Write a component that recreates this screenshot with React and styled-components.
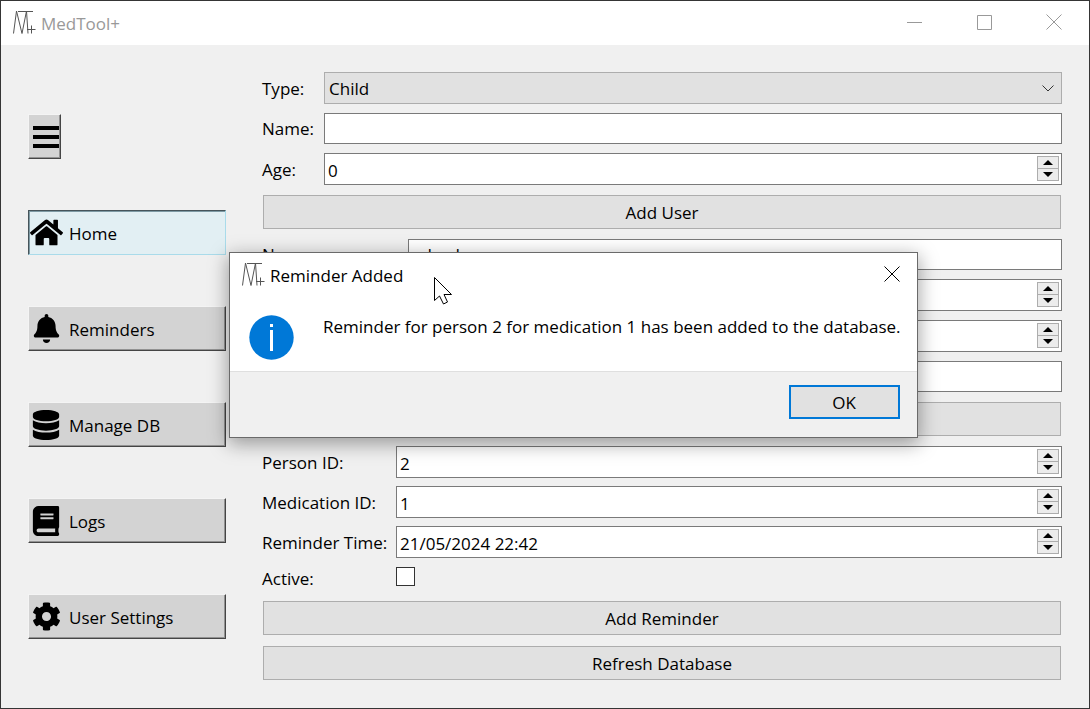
import React, { useState } from "react";
import styled, { createGlobalStyle, css } from "styled-components";
import { FaHome, FaBell, FaDatabase, FaBook, FaCog } from "react-icons/fa";

const GlobalStyle = createGlobalStyle`
  * { box-sizing: border-box; }
  body { margin: 0; background: #f0f0f0; }
  body, button, input, select {
    font-family: "Open Sans", "Noto Sans", sans-serif;
    font-size: 17px;
    line-height: 24px;
    color: #000;
  }
`;

const Window = styled.div`
  position: relative;
  display: flex;
  flex-direction: column;
  min-height: 100vh;
  border: 1px solid #353535;
  background: #f0f0f0;
`;

const TitleBar = styled.header`
  display: flex;
  align-items: center;
  height: 44px;
  padding-left: 11px;
  background: #fff;
`;

const Title = styled.h1`
  flex: 1;
  margin: 0 0 0 5px;
  padding-top: 1px;
  font-size: 17px;
  font-weight: 400;
  color: ${(p) => (p.$dim ? "#999" : "#000")};
`;

const CaptionButton = styled.button`
  display: flex;
  align-items: center;
  justify-content: center;
  width: ${(p) => p.$width || 70}px;
  height: 44px;
  padding: 0 0 2px;
  border: 0;
  background: transparent;
  color: ${(p) => (p.$dim ? "#999" : "#000")};
`;

const Body = styled.div`
  display: flex;
  flex: 1;
  padding: 27px 27px 28px;
`;

const Sidebar = styled.nav`
  display: flex;
  flex-direction: column;
  align-items: flex-start;
  gap: 51px;
  width: 198px;
  margin-right: 36px;
  padding-top: 42px;
`;

const NavButton = styled.button`
  display: flex;
  align-items: center;
  width: ${(p) => (p.$compact ? "33px" : "100%")};
  height: 45px;
  padding: 0 0 0 ${(p) => (p.$compact ? 4 : 0)}px;
  overflow: hidden;
  border: 1px solid;
  border-color: #f4f4f4 #454545 #454545 #f4f4f4;
  background: #d3d3d3;
  box-shadow: inset -1px -1px 0 #929292;
  text-align: left;
  ${(p) =>
    p.$pressed &&
    css`
      border-color: #46545a #a9dbea #a9dbea #46545a;
      box-shadow: inset 1px 1px 0 #7e9aa4;
      background: #e2eff3;
    `}
`;

const NavIcon = styled.span`
  display: flex;
  justify-content: center;
  flex: none;
  width: 34px;
  margin-right: 6px;
`;

const NavText = styled.span`
  padding-top: 2px;
`;

const Panel = styled.main`
  display: flex;
  flex: 1;
  flex-direction: column;
  gap: 10px;
  min-width: 0;
`;

const FormGroup = styled.section`
  display: grid;
  grid-template-columns: ${(p) => p.$labels}px 1fr;
  row-gap: ${(p) => p.$gap || 9}px;
  align-items: center;
`;

const Label = styled.label`
  padding-top: 1px;
  white-space: nowrap;
`;

const field = css`
  width: 100%;
  border: 1px solid #7a7a7a;
  border-radius: 0;
  background: #fff;
  outline: 0;
`;

const TextBox = styled.input`
  ${field}
  grid-column: 2;
  height: 31px;
  padding: 0 3px;
`;

const SelectWrap = styled.div`
  display: grid;
  align-items: center;
  > * { grid-area: 1 / 1; }
  > svg { justify-self: end; margin-right: 8px; pointer-events: none; }
`;

const Select = styled.select`
  ${field}
  height: 32px;
  padding: 1px 4px 0;
  border-color: #adadad;
  background: #e1e1e1;
  appearance: none;
`;

const SpinWrap = styled.div`
  ${field}
  grid-column: 2;
  display: flex;
  align-items: flex-start;
  height: 32px;
  padding: 2px 2px 0 0;
`;

const SpinInput = styled.input`
  flex: 1;
  min-width: 0;
  height: 28px;
  padding: 0 3px;
  border: 0;
  outline: 0;
  background: transparent;
`;

const Stepper = styled.div`
  display: flex;
  flex-direction: column;
  gap: 1px;
  width: 22px;
  height: 25px;
  border: 1px solid #adadad;
  background: #adadad;
`;

const StepButton = styled.button`
  display: flex;
  flex: 1;
  align-items: center;
  justify-content: center;
  min-height: 0;
  padding: 0;
  border: 0;
  background: #ececec;
`;

const CheckBox = styled.input`
  appearance: none;
  width: 19px;
  height: 19px;
  margin: 1px 0 0;
  border: 1px solid #333;
  background: #fff;
  align-self: start;
`;

const WideButton = styled.button`
  height: 34px;
  margin: 0 1px;
  padding: 2px 0 0;
  border: 1px solid #adadad;
  background: #e1e1e1;
`;

const FooterButtons = styled.div`
  display: flex;
  flex-direction: column;
  gap: 11px;
`;

const Dialog = styled.section`
  position: absolute;
  top: 251px;
  left: 228px;
  border: 1px solid #6a6a6a;
  background: #fff;
  box-shadow: 0 5px 18px 1px rgba(0, 0, 0, 0.36);
`;

const DialogMessage = styled.div`
  display: flex;
  align-items: flex-start;
  gap: 29px;
  padding: 18px 16px 11px 19px;
`;

const Message = styled.p`
  margin: 0;
  white-space: nowrap;
`;

const DialogFooter = styled.footer`
  display: flex;
  justify-content: flex-end;
  padding: 13px 17px 18px;
  border-top: 1px solid #dfdfdf;
  background: #f0f0f0;
`;

const OkButton = styled.button`
  width: 111px;
  height: 34px;
  padding: 1px 0 0;
  border: 2px solid #0078d7;
  background: #e1e1e1;
`;

const Pointer = styled.svg`
  position: absolute;
  top: 276px;
  left: 433px;
  pointer-events: none;
`;

const Logo = () => (
  <svg width="24" height="26" viewBox="0 0 24 26" fill="none" stroke="#555" strokeWidth="1" aria-hidden="true">
    <path d="M1.5 23.5 L4.5 1 L10 23.5 L14.5 1 L16 23.5" />
    <path d="M6 1.5 H21 M15 19.5 H23.5 M19.5 15.5 V23.5" />
  </svg>
);

const Cross = () => (
  <svg width="16" height="16" viewBox="0 0 16 16" stroke="currentColor" strokeWidth="1" aria-hidden="true">
    <path d="M.5 .5 L15.5 15.5 M15.5 .5 L.5 15.5" />
  </svg>
);

const Arrow = ({ down }) => (
  <svg width="10" height="5" viewBox="0 0 10 5" aria-hidden="true">
    <path d={down ? "M0 0 H10 L5 5 Z" : "M0 5 H10 L5 0 Z"} />
  </svg>
);

function Spin({ initial, ...rest }) {
  const [value, setValue] = useState(initial);
  const step = (n) => setValue((v) => (/^\d+$/.test(v) ? String(Math.max(0, Number(v) + n)) : v));
  return (
    <SpinWrap>
      <SpinInput {...rest} value={value} onChange={(e) => setValue(e.target.value)} />
      <Stepper>
        <StepButton type="button" aria-label="Increase" onClick={() => step(1)}><Arrow /></StepButton>
        <StepButton type="button" aria-label="Decrease" onClick={() => step(-1)}><Arrow down /></StepButton>
      </Stepper>
    </SpinWrap>
  );
}

const pages = [
  { name: "Home", icon: FaHome, size: 33 },
  { name: "Reminders", icon: FaBell, size: 29 },
  { name: "Manage DB", icon: FaDatabase, size: 30 },
  { name: "Logs", icon: FaBook, size: 30 },
  { name: "User Settings", icon: FaCog, size: 29 },
];

export default function App() {
  const [page, setPage] = useState("Home");
  const [open, setOpen] = useState(true);
  return (
    <>
      <GlobalStyle />
      <Window>
        <TitleBar>
          <Logo />
          <Title $dim>MedTool+</Title>
          <CaptionButton $dim aria-label="Minimize">
            <svg width="15" height="15" stroke="currentColor"><path d="M0 7.5 H15" /></svg>
          </CaptionButton>
          <CaptionButton $dim aria-label="Maximize">
            <svg width="15" height="15" stroke="currentColor" fill="none"><path d="M.5 .5 H14.5 V14.5 H.5 Z" /></svg>
          </CaptionButton>
          <CaptionButton $dim aria-label="Close"><Cross /></CaptionButton>
        </TitleBar>
        <Body>
          <Sidebar>
            <NavButton $compact aria-label="Toggle menu">
              <svg width="27" height="22" viewBox="0 0 27 22" aria-hidden="true">
                <path d="M0 0 H26 V4 H0 Z M0 9 H26 V13 H0 Z M0 18 H26 V22 H0 Z" />
              </svg>
            </NavButton>
            {pages.map(({ name, icon: Icon, size }) => (
              <NavButton key={name} $pressed={page === name} onClick={() => setPage(name)}>
                <NavIcon><Icon size={size} /></NavIcon>
                <NavText>{name}</NavText>
              </NavButton>
            ))}
          </Sidebar>
          <Panel>
            <FormGroup $labels={62}>
              <Label htmlFor="type">Type:</Label>
              <SelectWrap>
                <Select id="type" defaultValue="Child">
                  <option>Child</option>
                  <option>Adult</option>
                </Select>
                <svg width="12" height="7" fill="none" stroke="#333" aria-hidden="true"><path d="M.5 .5 L6 6 L11.5 .5" /></svg>
              </SelectWrap>
              <Label htmlFor="user-name">Name:</Label>
              <TextBox id="user-name" />
              <Label htmlFor="age">Age:</Label>
              <Spin id="age" initial="0" />
            </FormGroup>
            <WideButton>Add User</WideButton>
            <FormGroup $labels={146}>
              <Label htmlFor="med-name">Name:</Label>
              <TextBox id="med-name" defaultValue="adasd" />
              <Spin aria-label="Dosage" initial="0" />
              <Spin aria-label="Stock" initial="0" />
              <TextBox aria-label="Notes" />
            </FormGroup>
            <WideButton aria-label="Add Medication" />
            <FormGroup $labels={134} $gap={8}>
              <Label htmlFor="person">Person ID:</Label>
              <Spin id="person" initial="2" />
              <Label htmlFor="medication">Medication ID:</Label>
              <Spin id="medication" initial="1" />
              <Label htmlFor="time">Reminder Time:</Label>
              <Spin id="time" initial="21/05/2024 22:42" />
              <Label htmlFor="active">Active:</Label>
              <CheckBox id="active" type="checkbox" />
            </FormGroup>
            <FooterButtons>
              <WideButton>Add Reminder</WideButton>
              <WideButton>Refresh Database</WideButton>
            </FooterButtons>
          </Panel>
        </Body>
        {open && (
          <Dialog role="dialog" aria-labelledby="dialog-title">
            <TitleBar>
              <Logo />
              <Title as="h2" id="dialog-title">Reminder Added</Title>
              <CaptionButton $width={50} aria-label="Close" onClick={() => setOpen(false)}><Cross /></CaptionButton>
            </TitleBar>
            <DialogMessage>
              <svg width="45" height="45" viewBox="0 0 45 45" aria-hidden="true">
                <circle cx="22.5" cy="22.5" r="22.2" fill="#0078d7" />
                <path d="M21 9 H24 V12 H21 Z M21 15 H24 V36 H21 Z" fill="#fff" />
              </svg>
              <Message>Reminder for person 2 for medication 1 has been added to the database.</Message>
            </DialogMessage>
            <DialogFooter>
              <OkButton onClick={() => setOpen(false)}>OK</OkButton>
            </DialogFooter>
          </Dialog>
        )}
        <Pointer width="19" height="28" viewBox="0 0 19 28" fill="#fff" stroke="#000" aria-hidden="true">
          <path d="M.5 .5 V23.5 L5.5 19 L9.5 27 L13.5 25 L10 17.5 H17.5 Z" />
        </Pointer>
      </Window>
    </>
  );
}
